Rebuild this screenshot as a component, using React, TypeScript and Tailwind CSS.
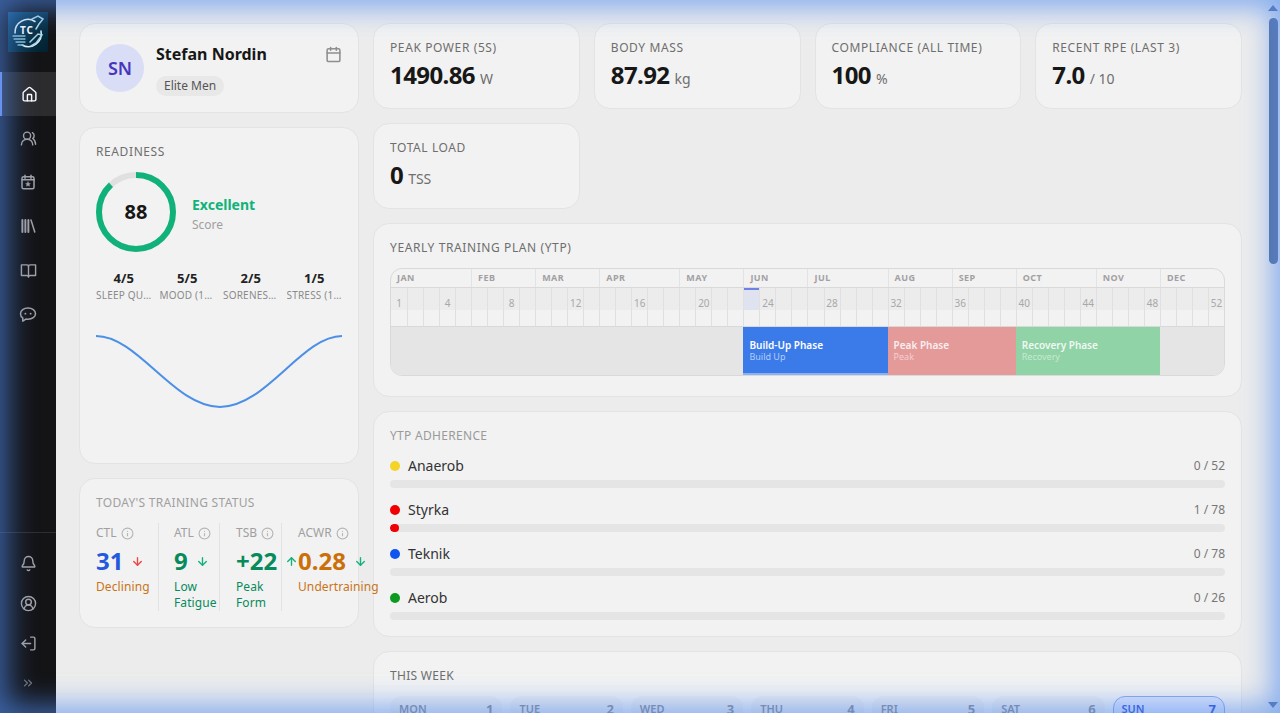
import {
  ArrowDown,
  ArrowUp,
  Bell,
  Calendar,
  ChevronsRight,
  CircleUserRound,
  House,
  Info,
  LogOut,
  UsersRound,
} from "lucide-react";

const stats = [
  { label: "PEAK POWER (5S)", value: "1490.86", unit: "W" },
  { label: "BODY MASS", value: "87.92", unit: "kg" },
  { label: "COMPLIANCE (ALL TIME)", value: "100", unit: "%" },
  { label: "RECENT RPE (LAST 3)", value: "7.0", unit: "/ 10" },
];

const months = [
  { name: "JAN", weeks: "col-span-5" },
  { name: "FEB", weeks: "col-span-4" },
  { name: "MAR", weeks: "col-span-4" },
  { name: "APR", weeks: "col-span-5" },
  { name: "MAY", weeks: "col-span-4" },
  { name: "JUN", weeks: "col-span-4" },
  { name: "JUL", weeks: "col-span-5" },
  { name: "AUG", weeks: "col-span-4" },
  { name: "SEP", weeks: "col-span-4" },
  { name: "OCT", weeks: "col-span-5" },
  { name: "NOV", weeks: "col-span-4" },
  { name: "DEC", weeks: "col-span-4" },
];

const weeks = Array.from({ length: 52 }, (_, i) => i + 1);
const labelled = [1, 4, 8, 12, 16, 20, 24, 28, 32, 36, 40, 44, 48, 52];

const adherence = [
  { name: "Anaerob", dot: "bg-[#f5d327]", count: "0 / 52", fill: false },
  { name: "Styrka", dot: "bg-[#f00000]", count: "1 / 78", fill: true },
  { name: "Teknik", dot: "bg-[#0f55ee]", count: "0 / 78", fill: false },
  { name: "Aerob", dot: "bg-[#0c9a1f]", count: "0 / 26", fill: false },
];

const days = [
  ["MON", "1"],
  ["TUE", "2"],
  ["WED", "3"],
  ["THU", "4"],
  ["FRI", "5"],
  ["SAT", "6"],
  ["SUN", "7"],
];

const wellness = [
  { score: "4/5", label: "SLEEP QUALITY" },
  { score: "5/5", label: "MOOD (1-5)" },
  { score: "2/5", label: "SORENESS (1-5)" },
  { score: "1/5", label: "STRESS (1-5)" },
];

function CalendarStar() {
  return (
    <svg width="18" height="18" viewBox="0 0 24 24" fill="none" stroke="currentColor" strokeWidth="2" strokeLinecap="round">
      <rect x="4" y="5" width="16" height="16" rx="2" />
      <path d="M8 3v4M16 3v4M4 9h16" />
      <path d="M12 11.6l1 2 2.2.3-1.6 1.55.4 2.2-2-1.05-2 1.05.4-2.2-1.6-1.55 2.2-.3z" fill="currentColor" strokeWidth="0.5" />
    </svg>
  );
}

function Books() {
  return (
    <svg width="18" height="18" viewBox="0 0 24 24" fill="none" stroke="currentColor" strokeLinecap="round">
      <path d="M4.5 4v16M8.5 4v16M12.5 4v16" strokeWidth="2.6" />
      <path d="M16 4l5 16" strokeWidth="2" />
    </svg>
  );
}

function OpenBook() {
  return (
    <svg width="17" height="17" viewBox="0 0 24 24" fill="none" stroke="currentColor" strokeWidth="2" strokeLinejoin="round" strokeLinecap="round">
      <path d="M2 4h8a2 2 0 0 1 2 2 2 2 0 0 1 2-2h8v15h-8a2 2 0 0 0-2 2 2 2 0 0 0-2-2H2z" />
      <path d="M12 6v15" />
    </svg>
  );
}

function ChatDots() {
  return (
    <svg width="18" height="18" viewBox="0 0 24 24" fill="none" stroke="currentColor" strokeWidth="2" strokeLinejoin="round">
      <path d="M12 4c5.5 0 10 3.1 10 7.5S17.500 19 12 19c-1 0-2-.1-2.900-.3L5 21.500v-4.300C3 15.800 2 13.800 2 11.500C2 7.100 6.500 4 12 4z" />
      <circle cx="8.500" cy="11.500" r="1.300" fill="currentColor" stroke="none" />
      <circle cx="15.500" cy="11.500" r="1.300" fill="currentColor" stroke="none" />
    </svg>
  );
}

function Logo() {
  return (
    <div className="relative h-10 w-10 overflow-hidden bg-gradient-to-br from-[#124c6c] to-[#03202f]">
      <svg width="40" height="40" viewBox="0 0 40 40" fill="none" stroke="#e6f3f7" strokeLinecap="round" className="absolute inset-0">
        <path d="M27 9.500A13 13 0 0 0 7 21M33 19a13 13 0 0 1-19 14" strokeWidth="1.500" />
        <path d="M24 7l6-3 5 3-4 5-3 5M22 30l8-8 4 1-6 8-5 3" strokeWidth="1.500" stroke="#a9d6e6" />
        <path d="M5 24h12M6 27h11M8 30h9M10 33h5" strokeWidth="1.300" stroke="#8cc0d4" />
      </svg>
      <span className="absolute left-3 top-3 text-[10px] font-bold leading-3 tracking-[1px] text-white">TC</span>
    </div>
  );
}

function Sidebar() {
  const iconClass = "text-[#a2a2a6]";
  return (
    <aside className="flex h-full w-14 shrink-0 flex-col bg-[#141416]">
      <div className="flex h-[72px] shrink-0 items-start justify-center pt-3">
        <Logo />
      </div>
      <nav className="flex flex-col">
        <div className="flex h-11 items-center justify-center border-l-2 border-[#7d98f2] bg-[#2c2c2e] text-white">
          <House size={17} />
        </div>
        <div className={`flex h-11 items-center justify-center ${iconClass}`}>
          <UsersRound size={17} />
        </div>
        <div className={`flex h-11 items-center justify-center ${iconClass}`}>
          <CalendarStar />
        </div>
        <div className={`flex h-11 items-center justify-center ${iconClass}`}>
          <Books />
        </div>
        <div className={`flex h-11 items-center justify-center ${iconClass}`}>
          <OpenBook />
        </div>
        <div className={`flex h-11 items-center justify-center ${iconClass}`}>
          <ChatDots />
        </div>
      </nav>
      <div className={`mt-auto flex flex-col border-t border-[#2e2e32] pb-2.5 pt-2.5 ${iconClass}`}>
        <div className="flex h-10 items-center justify-center">
          <Bell size={17} />
        </div>
        <div className="flex h-10 items-center justify-center">
          <CircleUserRound size={17} />
        </div>
        <div className="flex h-10 items-center justify-center">
          <LogOut size={17} className="-scale-x-100" />
        </div>
        <div className="flex h-10 items-center justify-center text-[#77777c]">
          <ChevronsRight size={14} />
        </div>
      </div>
    </aside>
  );
}

function Card({ className, children }: { className?: string; children: React.ReactNode }) {
  return <section className={`rounded-2xl border border-[#e3e3e3] bg-[#f2f2f2] px-4 ${className ?? ""}`}>{children}</section>;
}

function Ring() {
  return (
    <div className="relative h-20 w-20 shrink-0">
      <svg width="80" height="80" viewBox="0 0 80 80" fill="none" className="-rotate-90">
        <circle cx="40" cy="40" r="37" stroke="#e0e0e0" strokeWidth="6" />
        <circle cx="40" cy="40" r="37" stroke="#10b27a" strokeWidth="6" strokeDasharray="204.6 232.5" />
      </svg>
      <div className="absolute inset-0 flex items-center justify-center text-xl font-bold text-[#161616]">88</div>
    </div>
  );
}

function LoadMetric({
  label,
  value,
  valueColor,
  arrow,
  note,
  noteColor,
  className,
}: {
  label: string;
  value: string;
  valueColor: string;
  arrow: React.ReactNode;
  note: React.ReactNode;
  noteColor: string;
  className: string;
}) {
  return (
    <div className={`h-[88px] shrink-0 ${className}`}>
      <div className="flex items-center gap-1 whitespace-nowrap text-xs leading-5 text-[#a0a0a0]">
        {label}
        <Info size={13} className="shrink-0 text-[#b4b4b4]" />
      </div>
      <div className="mt-0.5 flex h-8 items-center whitespace-nowrap">
        <span className={`text-2xl font-bold ${valueColor}`}>{value}</span>
        {arrow}
      </div>
      <div className={`mt-0.5 whitespace-nowrap text-xs leading-4 tracking-[0.1px] ${noteColor}`}>{note}</div>
    </div>
  );
}

function LeftColumn() {
  return (
    <div className="relative z-10 flex w-[280px] shrink-0 flex-col gap-3.5">
      <Card className="flex h-[90px] items-center gap-3">
        <div className="flex h-12 w-12 shrink-0 items-center justify-center rounded-full bg-[#d9ddf6] text-lg font-semibold text-[#4536bd]">SN</div>
        <div className="flex-1 pt-0.5">
          <div className="text-base font-bold leading-6 text-[#171717]">Stefan Nordin</div>
          <span className="mt-2.5 inline-block rounded-full bg-[#e8e8e8] px-2 text-xs leading-5 text-[#555]">Elite Men</span>
        </div>
        <Calendar size={17} strokeWidth={2.2} className="mb-7 text-[#8f8f8f]" />
      </Card>

      <Card className="h-[337px] pt-4">
        <h2 className="text-xs leading-4 tracking-wider text-[#6e6e6e]">READINESS</h2>
        <div className="mt-3 flex items-center gap-4">
          <Ring />
          <div className="pt-1">
            <div className="text-sm font-bold leading-5 text-[#10b27a]">Excellent</div>
            <div className="mt-0.5 text-xs leading-4 text-[#a0a0a0]">Score</div>
          </div>
        </div>
        <div className="mt-[17px] grid grid-cols-4 gap-2">
          {wellness.map((w) => (
            <div key={w.label} className="min-w-0 text-center">
              <div className="text-[13px] font-bold leading-[18px] text-[#222]">{w.score}</div>
              <div className="mt-px truncate text-[10px] leading-[14px] tracking-[0.02em] text-[#8a8a8a]">{w.label}</div>
            </div>
          ))}
        </div>
        <svg width="246" height="80" viewBox="0 0 246 80" fill="none" className="mt-[31px]">
          <path d="M0 3C42 3 78 74 124 74C170 74 206 3 246 3" stroke="#4c8fe8" strokeWidth="2" />
        </svg>
      </Card>

      <Card className="h-[150px] pt-4">
        <h2 className="text-xs leading-4 tracking-wide text-[#a0a0a0]">TODAY'S TRAINING STATUS</h2>
        <div className="mt-3 flex">
          <LoadMetric
            className="w-[63px] border-r border-[#e2e2e2]"
            label="CTL"
            value="31"
            valueColor="text-[#2458de]"
            arrow={<ArrowDown size={13} strokeWidth={2.5} className="ml-2 text-[#ef4444]" />}
            note="Declining"
            noteColor="text-[#c9741a]"
          />
          <LoadMetric
            className="w-[61px] border-r border-[#e2e2e2] pl-[15px]"
            label="ATL"
            value="9"
            valueColor="text-[#078a5c]"
            arrow={<ArrowDown size={13} strokeWidth={2.5} className="ml-2 text-[#10b27a]" />}
            note={<>Low<br />Fatigue</>}
            noteColor="text-[#078a5c]"
          />
          <LoadMetric
            className="w-[62px] border-r border-[#e2e2e2] pl-4"
            label="TSB"
            value="+22"
            valueColor="text-[#078a5c]"
            arrow={<ArrowUp size={13} strokeWidth={2.5} className="ml-2 shrink-0 text-[#10b27a]" />}
            note={<>Peak<br />Form</>}
            noteColor="text-[#078a5c]"
          />
          <LoadMetric
            className="w-[62px] pl-4"
            label="ACWR"
            value="0.28"
            valueColor="text-[#cc6f09]"
            arrow={<ArrowDown size={13} strokeWidth={2.5} className="ml-2 shrink-0 text-[#10b27a]" />}
            note="Undertraining"
            noteColor="text-[#c9741a]"
          />
        </div>
      </Card>
    </div>
  );
}

function YearPlan() {
  return (
    <Card className="h-[174px] pt-4">
      <h2 className="text-xs leading-4 tracking-wider text-[#6e6e6e]">YEARLY TRAINING PLAN (YTP)</h2>
      <div className="mt-[12px] overflow-hidden rounded-xl border border-[#d9d9d9]">
        <div className="grid h-[19px] grid-cols-[repeat(52,minmax(0,1fr))] border-b border-[#d9d9d9]">
          {months.map((m, i) => (
            <div
              key={m.name}
              className={`${m.weeks} pl-1.5 text-[9px] font-bold leading-[18px] tracking-wider text-[#a3a0a3] ${i > 0 ? "border-l border-[#e3e3e3]" : ""}`}
            >
              {m.name}
            </div>
          ))}
        </div>
        <div className="grid h-[39px] grid-cols-[repeat(52,minmax(0,1fr))] border-b border-[#d9d9d9]">
          {weeks.map((w) => (
            <div key={w} className={`flex flex-col ${w > 1 ? "border-l border-[#e0e0e0]" : ""}`}>
              <div
                className={`h-[22px] whitespace-nowrap text-center text-[10px] leading-[31px] text-[#a8a8a8] ${
                  w === 23 ? "border-t-2 border-[#6f7fe8] bg-[#dfe3ef] leading-[29px]" : "bg-[#ececec]"
                }`}
              >
                {labelled.includes(w) ? w : ""}
              </div>
              <div className="flex-1 bg-[#f2f2f2]" />
            </div>
          ))}
        </div>
        <div className="grid h-[48px] grid-cols-[repeat(52,minmax(0,1fr))] bg-[#e5e5e5] text-[10px] leading-3">
          <div className="col-span-22" />
          <div className="col-span-9 flex flex-col justify-center border-b-2 border-[#8db0f0] bg-[#3b7be9] pl-1.5 pt-0.5 text-white">
            <span className="font-semibold">Build-Up Phase</span>
            <span className="text-[9px] text-[#b4ccf6]">Build Up</span>
          </div>
          <div className="col-span-8 flex flex-col justify-center bg-[#e59a9a] pl-1.5 text-[#f9efef]">
            <span className="font-semibold">Peak Phase</span>
            <span className="text-[9px] text-[#f3cfcf]">Peak</span>
          </div>
          <div className="col-span-9 flex flex-col justify-center bg-[#8fd3a6] pl-1.5 text-[#f1f8f3]">
            <span className="font-semibold">Recovery Phase</span>
            <span className="text-[9px] text-[#c9e9d4]">Recovery</span>
          </div>
          <div className="col-span-4" />
        </div>
      </div>
    </Card>
  );
}

function RightColumn() {
  return (
    <div className="flex min-w-0 flex-1 flex-col gap-3.5">
      <div className="grid grid-cols-4 gap-3.5">
        {[...stats, { label: "TOTAL LOAD", value: "0", unit: "TSS" }].map((s) => (
          <Card key={s.label} className="h-[86px] pt-4">
            <div className="text-xs leading-4 tracking-wider text-[#6e6e6e]">{s.label}</div>
            <div className="mt-[3px] flex items-baseline gap-[5px] text-[#171717]">
              <span className="text-2xl font-bold leading-8 tracking-tight">{s.value}</span>
              <span className="text-sm text-[#6e6e6e]">{s.unit}</span>
            </div>
          </Card>
        ))}
      </div>

      <YearPlan />

      <Card className="h-[226px] pt-4">
        <h2 className="text-xs leading-4 tracking-wide text-[#9a9a9a]">YTP ADHERENCE</h2>
        <div className="mt-3 flex flex-col gap-3">
          {adherence.map((a) => (
            <div key={a.name}>
              <div className="flex h-[22px] items-center pb-0.5">
                <span className={`mr-2 h-2.5 w-2.5 rounded-full ${a.dot}`} />
                <span className="flex-1 text-sm text-[#333]">{a.name}</span>
                <span className="text-xs text-[#777]">{a.count}</span>
              </div>
              <div className="mt-[2px] h-2 overflow-hidden rounded-full bg-[#e5e5e5]">
                {a.fill && <div className="h-2 w-[9px] rounded-full bg-[#f00000]" />}
              </div>
            </div>
          ))}
        </div>
      </Card>

      <Card className="h-[120px] pt-4">
        <h2 className="text-xs leading-4 tracking-wide text-[#6e6e6e]">THIS WEEK</h2>
        <div className="mt-3 grid grid-cols-7 gap-2">
          {days.map(([day, date]) => (
            <div
              key={day}
              className={`flex h-12 justify-between rounded-xl border px-2 pt-1 text-[11px] font-semibold leading-4 ${
                day === "SUN" ? "border-[#8ea6ee] bg-[#dfe6fb] text-[#2f4fd8]" : "border-[#ececec] bg-[#ececec] text-[#8c8c94]"
              }`}
            >
              <span>{day}</span>
              <span className="text-[13px] font-bold">{date}</span>
            </div>
          ))}
        </div>
      </Card>
    </div>
  );
}

function Scrollbar() {
  return (
    <div className="flex h-full w-3 shrink-0 flex-col items-center pr-0.5 text-[#5a7099]">
      <svg width="10" height="6" viewBox="0 0 10 6" className="mt-[5px]" fill="currentColor">
        <path d="M5 0l5 6H0z" />
      </svg>
      <div className="mt-[7px] h-[246px] w-[9px] rounded-full bg-[#5a7099]" />
      <svg width="10" height="6" viewBox="0 0 10 6" className="mb-[5px] mt-auto" fill="currentColor">
        <path d="M5 6L0 0h10z" />
      </svg>
    </div>
  );
}

export default function App() {
  return (
    <div className="relative flex h-[713px] w-full overflow-hidden bg-[#ececec] font-['Noto_Sans',sans-serif]">
      <Sidebar />
      <main className="flex min-w-0 flex-1 items-start gap-3.5 overflow-hidden pl-[23px] pr-[26px] pt-[23px]">
        <LeftColumn />
        <RightColumn />
      </main>
      <Scrollbar />
      <div className="pointer-events-none absolute inset-0 z-20 shadow-[inset_0_0_28px_8px_rgba(80,140,240,0.66)]" />
    </div>
  );
}
